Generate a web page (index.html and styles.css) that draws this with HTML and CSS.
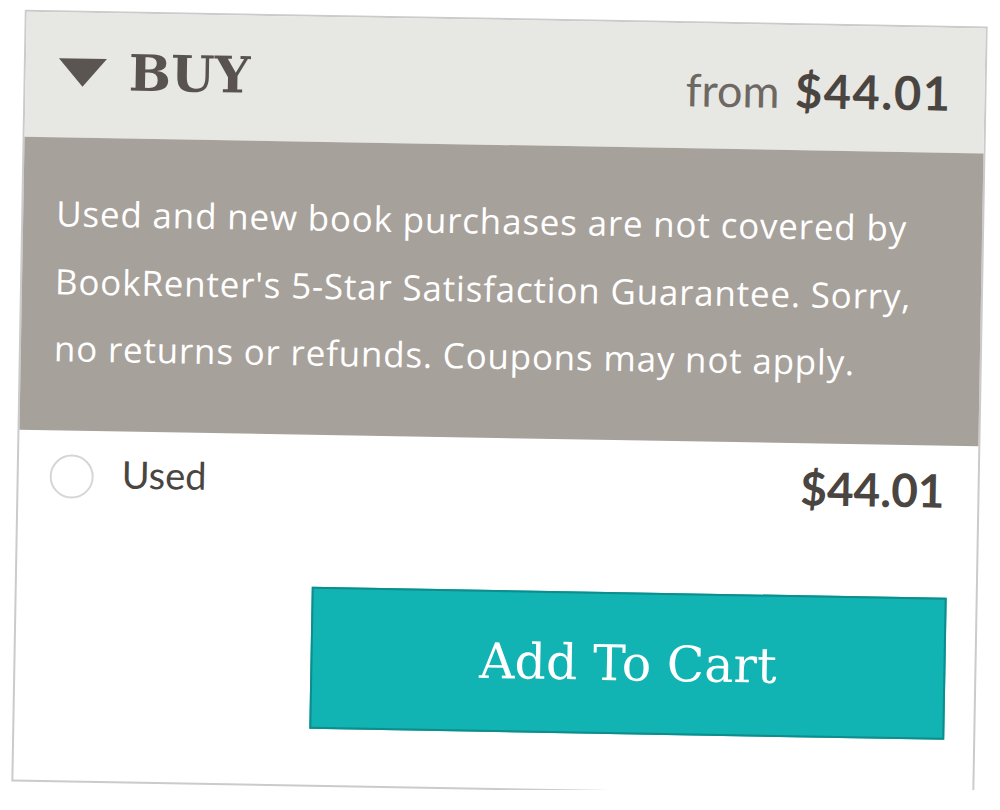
FILE: index.html
```html
<!DOCTYPE html>
<html lang="en">
<head>
    <meta charset="UTF-8">
    <title>Buy</title>
    <link rel="stylesheet" href="styles.css">
</head>
<body>

<div class="card">
    <div class="buy-head">
        <div class="buy-title">
            <span class="caret"></span>
            <h2>BUY</h2>
        </div>
        <div class="from-price">from <strong>$44.01</strong></div>
    </div>

    <div class="notice">
        Used and new book purchases are not covered by<br>
        BookRenter's 5-Star Satisfaction Guarantee. Sorry,<br>
        no returns or refunds. Coupons may not apply.
    </div>

    <div class="options">
        <label class="option">
            <span class="radio"></span>
            <span class="option-name">Used</span>
            <span class="option-price">$44.01</span>
        </label>
        <button class="cart-btn">Add To Cart</button>
    </div>
</div>

</body>
</html>
```

FILE: styles.css
```css
body { margin: 0; background: #fff; font-family: Lato, "Open Sans", sans-serif; }

.card {
    box-sizing: border-box;
    width: 963px;
    height: 772px;
    margin: 18px 0 0 18px;
    border: 2px solid #cbcbcb;
    background: #fff;
    transform: rotate(1deg);
}

.buy-head {
    display: flex;
    align-items: center;
    justify-content: space-between;
    height: 125px;
    padding: 0 33px;
    background: #e7e7e3;
}
.buy-title {
    display: flex;
    align-items: center;
    gap: 22px;
    margin-bottom: 6px;
}
.caret {
    width: 0;
    height: 0;
    border-left: 24px solid transparent;
    border-right: 24px solid transparent;
    border-top: 28px solid #5a5550;
}
.buy-title h2 {
    margin: 0;
    font-family: "DejaVu Serif", serif;
    font-size: 50px;
    font-weight: bold;
    line-height: 1;
    color: #58534e;
}
.from-price {
    font-size: 45px;
    color: #6d6862;
    margin-top: 4px;
}
.from-price strong {
    font-size: 47px;
    font-weight: bold;
    color: #4a4540;
    letter-spacing: 1.5px;
    margin-left: 4px;
}

.notice {
    box-sizing: border-box;
    height: 293px;
    padding: 42px 10px 0 33px;
    background: #a7a19b;
    color: #fff;
    font-family: "Open Sans", sans-serif;
    font-size: 35px;
    letter-spacing: 0.8px;
    line-height: 67.5px;
}

.options {
    padding: 15px 29px 0 31px;
}
.option {
    display: flex;
    align-items: center;
    height: 61px;
    padding-right: 4px;
}
.radio {
    box-sizing: border-box;
    width: 44px;
    height: 44px;
    border: 2px solid #d6d6d6;
    border-radius: 50%;
    margin-right: 28px;
}
.option-name {
    font-size: 38px;
    color: #4a4540;
    margin-top: -8px;
}
.option-price {
    margin-left: auto;
    font-size: 46px;
    font-weight: bold;
    color: #4a4540;
    margin-top: -2px;
}
.cart-btn {
    display: block;
    width: 635px;
    height: 142px;
    margin: 76px 0 0 auto;
    border: 2px solid #0e8d8d;
    background: #11b3b3;
    color: #fff;
    font-family: "DejaVu Serif", serif;
    font-size: 49px;
    cursor: pointer;
}
```
